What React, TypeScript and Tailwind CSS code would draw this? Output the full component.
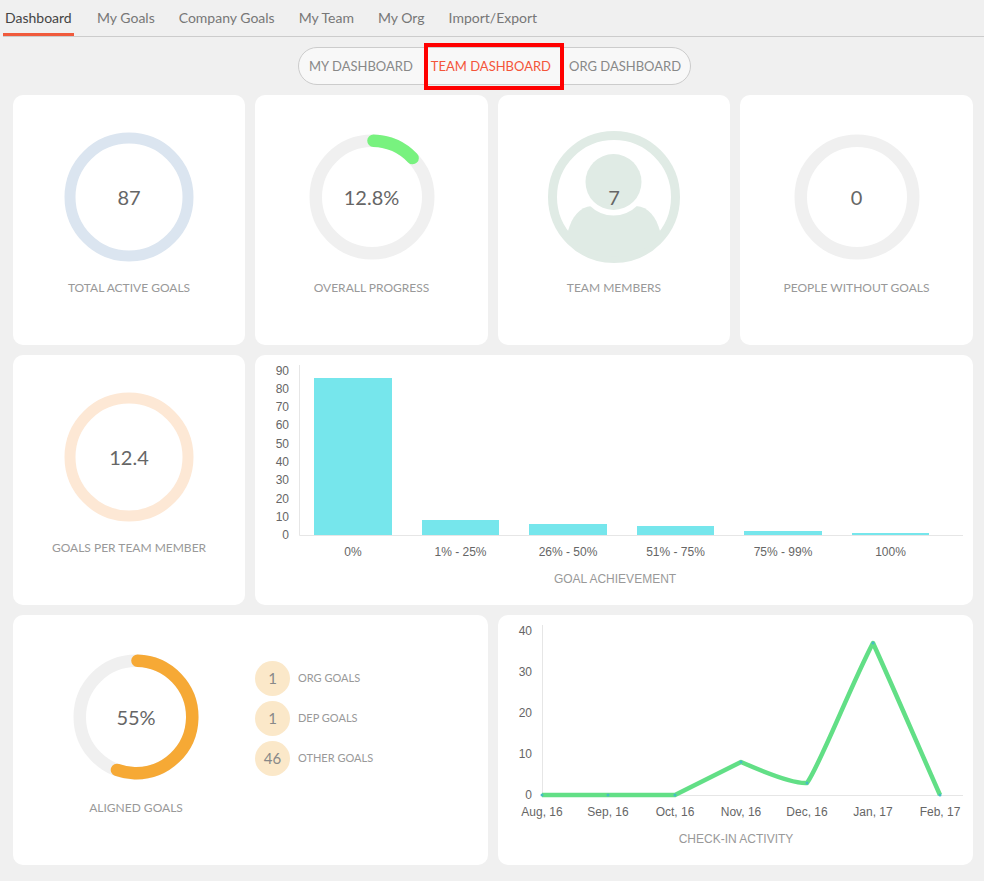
import React from "react";

function Donut({ size, r, sw, track, value, color, pct, start = 0 }: { size: number; r: number; sw: number; track: string; value: string; color?: string; pct?: number; start?: number }) {
  const c = 2 * Math.PI * r;
  const m = size / 2;
  return (
    <div className="relative shrink-0" style={{ width: size, height: size }}>
      <svg width={size} height={size} className="block">
        <circle cx={m} cy={m} r={r} fill="none" stroke={track} strokeWidth={sw} />
        {color && pct !== undefined && (
          <circle cx={m} cy={m} r={r} fill="none" stroke={color} strokeWidth={sw} strokeLinecap="round" strokeDasharray={`${(c * pct) / 100} ${c}`} transform={`rotate(${start - 90} ${m} ${m})`} />
        )}
      </svg>
      <div className="absolute inset-0 flex items-center justify-center text-[20px] text-[#666]">{value}</div>
    </div>
  );
}

function Label({ children, className = "" }: { children: React.ReactNode; className?: string }) {
  return <div className={`text-[12px] leading-4 text-[#999] ${className}`}>{children}</div>;
}

function StatCard({ label, children, className = "" }: { label: string; children: React.ReactNode; className?: string }) {
  return (
    <div className={`h-[250px] rounded-[10px] bg-white flex flex-col items-center ${className}`}>
      <div className="h-[172px] pt-[37px] flex justify-center items-start">{children}</div>
      <Label className="mt-[13px]">{label}</Label>
    </div>
  );
}

function PersonRing() {
  return (
    <div className="relative w-[132px] h-[132px] -mt-[1px]">
      <svg width={132} height={132} className="block">
        <defs>
          <clipPath id="inner">
            <circle cx={66} cy={66} r={60} />
          </clipPath>
        </defs>
        <circle cx={66} cy={66} r={61.5} fill="none" stroke="#e0ebe5" strokeWidth={9} />
        <g clipPath="url(#inner)">
          <path d="M20 100 C24 86 31 76 44 75 L88 75 C101 76 108 86 112 100 L120 135 L12 135 Z" fill="#e0ebe5" />
        </g>
        <circle cx={65.5} cy={51} r={33.5} fill="#fff" />
        <circle cx={65.5} cy={51} r={28} fill="#e0ebe5" />
      </svg>
      <div className="absolute inset-0 flex items-center justify-center text-[20px] text-[#666]">7</div>
    </div>
  );
}

const axisText = { fontFamily: '"Liberation Sans", Arial, sans-serif', fontSize: 12, fill: "#666" };

function BarChart() {
  const ticks = [90, 80, 70, 60, 50, 40, 30, 20, 10, 0];
  const bars = [
    ["0%", 59, 78, 23],
    ["1% - 25%", 167, 77, 165],
    ["26% - 50%", 274, 78, 169],
    ["51% - 75%", 382, 77, 171],
    ["75% - 99%", 489, 78, 176],
    ["100%", 597, 77, 178],
  ] as const;
  return (
    <svg width={718} height={250} className="block">
      {bars.map(([l, x, w, y]) => (
        <g key={l}>
          <rect x={x} y={y} width={w} height={180 - y} fill="#76e6ec" />
          <text x={x + w / 2} y={201} textAnchor="middle" style={axisText}>{l}</text>
        </g>
      ))}
      <path d="M44.5 10 V180.5 H708" fill="none" stroke="#e6e6e6" strokeWidth={1} />
      {ticks.map((t, i) => (
        <text key={t} x={34} y={19.5 + i * 18.33} textAnchor="end" style={axisText}>{t}</text>
      ))}
      <text x={360} y={228} textAnchor="middle" style={{ ...axisText, fill: "#999" }}>GOAL ACHIEVEMENT</text>
    </svg>
  );
}

function LineChart() {
  const labels = ["Aug, 16", "Sep, 16", "Oct, 16", "Nov, 16", "Dec, 16", "Jan, 17", "Feb, 17"];
  const xs = [44, 110, 177, 243, 309, 375, 442];
  const ys = [180, 180, 180, 147, 168, 28, 180];
  return (
    <svg width={475} height={250} className="block">
      <path d="M44.5 10 V180.5 H465" fill="none" stroke="#e6e6e6" strokeWidth={1} />
      {[40, 30, 20, 10, 0].map((t, i) => (
        <text key={t} x={34} y={20 + i * 41.1} textAnchor="end" style={axisText}>{t}</text>
      ))}
      <path
        d="M44 180 L177 180 C199 169 221 158 243 147 C268 158 296 169 309 168 C322 150 352 72 375 28 C395 72 422 135 442 180"
        fill="none"
        stroke="#62df86"
        strokeWidth={4.5}
        strokeLinejoin="round"
      />
      {xs.map((x, i) => (
        <circle key={x} cx={x} cy={ys[i]} r={1.5} fill="#45bcc4" />
      ))}
      {labels.map((l, i) => (
        <text key={l} x={xs[i]} y={201} textAnchor="middle" style={axisText}>{l}</text>
      ))}
      <text x={238} y={228} textAnchor="middle" style={{ ...axisText, fill: "#999" }}>CHECK-IN ACTIVITY</text>
    </svg>
  );
}

function GoalRow({ n, label }: { n: string; label: string }) {
  return (
    <div className="flex items-center gap-[8px]">
      <div className="w-[35px] h-[35px] rounded-full bg-[#fbe8c9] flex items-center justify-center text-[15px] text-[#888]">{n}</div>
      <div className="text-[11px] text-[#999]">{label}</div>
    </div>
  );
}

export default function App() {
  const tabs = ["My Goals", "Company Goals", "My Team", "My Org", "Import/Export"];
  return (
    <div className="w-[984px] h-[881px] overflow-hidden bg-[#f0f0f0] font-['Lato','Liberation_Sans',sans-serif]">
      <div className="flex ml-[3px] h-[37px] border-b border-[#ccc] gap-[24px] text-[14px]">
        <div className="px-[2px] w-[71px] -mr-[1px] h-[36px] pt-[7px] border-b-[3px] border-[#f05a3c] text-[#444] whitespace-nowrap">Dashboard</div>
        {tabs.map((t) => (
          <div key={t} className="pt-[7px] text-[#777] whitespace-nowrap">{t}</div>
        ))}
      </div>

      <div className="flex justify-center mt-[10px] mb-[10px] pl-[5px]">
        <div className="relative h-[38px] w-[393px] rounded-full border border-[#ccc] bg-[#f8f8f8] flex items-center pl-[10px] pt-[1px] gap-[18px] text-[13px] text-[#888] whitespace-nowrap">
          <span>MY DASHBOARD</span>
          <span className="text-[#f4553a]">TEAM DASHBOARD</span>
          <span>ORG DASHBOARD</span>
          <div className="absolute left-[125px] -top-[5px] w-[140px] h-[47px] border-[4px] border-[#ff0000]" />
        </div>
      </div>

      <div className="grid grid-cols-[232px_233px_232px_233px] gap-[10px] ml-[13px] w-[960px]">
        <StatCard label="TOTAL ACTIVE GOALS">
          <Donut size={130} r={59} sw={11} track="#dbe5f0" value="87" />
        </StatCard>
        <StatCard label="OVERALL PROGRESS">
          <Donut size={130} r={56.25} sw={12.5} track="#f0f0f0" color="#78f27f" pct={12.4} start={1.5} value="12.8%" />
        </StatCard>
        <StatCard label="TEAM MEMBERS">
          <PersonRing />
        </StatCard>
        <StatCard label="PEOPLE WITHOUT GOALS">
          <Donut size={130} r={56.25} sw={12.5} track="#f0f0f0" value="0" />
        </StatCard>

        <StatCard label="GOALS PER TEAM MEMBER">
          <Donut size={130} r={59} sw={11} track="#fde8d5" value="12.4" />
        </StatCard>
        <div className="col-span-3 h-[250px] rounded-[10px] bg-white">
          <BarChart />
        </div>

        <div className="col-span-2 h-[250px] rounded-[10px] bg-white flex">
          <div className="w-[246px] flex flex-col items-center pt-[37px]">
            <Donut size={130} r={56.25} sw={12.5} track="#f0f0f0" color="#f6a935" pct={55} start={1.5} value="55%" />
            <Label className="mt-[18px]">ALIGNED GOALS</Label>
          </div>
          <div className="flex flex-col gap-[5px] pt-[46px] ml-[-4px]">
            <GoalRow n="1" label="ORG GOALS" />
            <GoalRow n="1" label="DEP GOALS" />
            <GoalRow n="46" label="OTHER GOALS" />
          </div>
        </div>
        <div className="col-span-2 h-[250px] rounded-[10px] bg-white">
          <LineChart />
        </div>
      </div>
    </div>
  );
}
